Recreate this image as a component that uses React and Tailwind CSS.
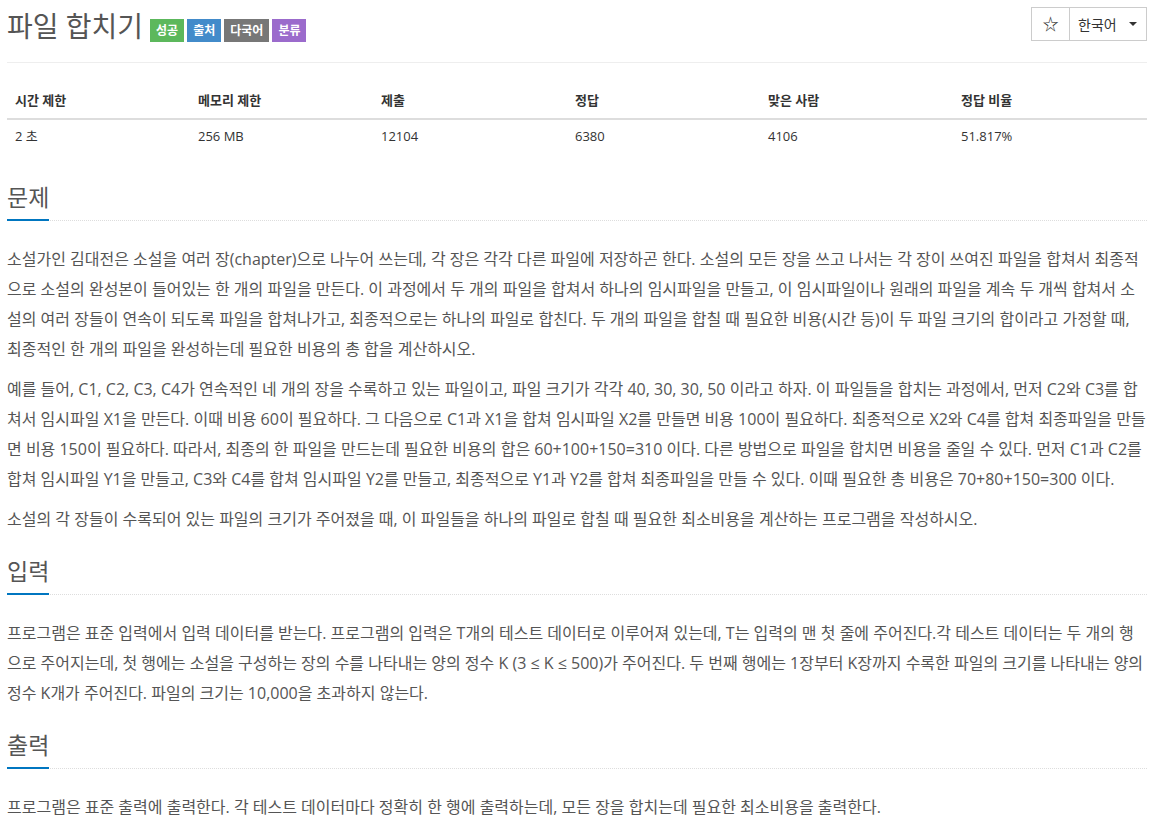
const FONT = { fontFamily: '"Open Sans", "Noto Sans CJK KR", sans-serif' };

const stats = [
  { label: "시간 제한", value: "2 초" },
  { label: "메모리 제한", value: "256 MB" },
  { label: "제출", value: "12104" },
  { label: "정답", value: "6380" },
  { label: "맞은 사람", value: "4106" },
  { label: "정답 비율", value: "51.817%" },
];

const badges = [
  { text: "성공", color: "bg-[#5cb85c]" },
  { text: "출처", color: "bg-[#428bca]" },
  { text: "다국어", color: "bg-[#777777]" },
  { text: "분류", color: "bg-[#9b6bcc]" },
];

function Section({ title, children }) {
  return (
    <section className="mt-[24px]">
      <div className="border-b border-dotted border-[#dddddd]">
        <h2 className="-mb-px inline-block border-b-2 border-[#0076c0] pb-[9px] text-[23px] leading-[26px] text-[#555555]">
          {title}
        </h2>
      </div>
      <div className="mt-[23px] space-y-[10px] text-[16px] leading-[30px] text-[#555555]">{children}</div>
    </section>
  );
}

export default function App() {
  return (
    <div className="min-h-screen bg-white pl-[7px] pt-[7px]" style={FONT}>
      <div className="w-[1140px]">
        <div className="flex items-start justify-between border-b border-[#eeeeee] pb-[20px]">
          <div className="flex items-start">
            <h1 className="mt-[3px] text-[28px] leading-[32px] text-[#555555]">파일 합치기</h1>
            <div className="ml-[7px] mt-[12px] flex gap-[3px]">
              {badges.map((b) => (
                <span
                  key={b.text}
                  className={`${b.color} flex h-[23px] items-center px-[6px] text-[12px] font-bold text-white`}
                >
                  {b.text}
                </span>
              ))}
            </div>
          </div>
          <div className="flex h-[34px] border border-[#cccccc] text-[14px] text-[#333333]">
            <button className="flex w-[38px] items-center justify-center border-r border-[#cccccc] text-[16px]">
              ☆
            </button>
            <button className="flex w-[76px] items-center gap-[12px] pl-[8px]">
              <span>한국어</span>
              <span className="h-0 w-0 border-x-[4px] border-t-[4px] border-x-transparent border-t-[#333333]" />
            </button>
          </div>
        </div>

        <div className="mt-[19px] text-[13px] text-[#333333]">
          <div className="grid grid-cols-[183px_183px_194px_193px_193px_1fr] border-b-2 border-[#dddddd]">
            {stats.map((s) => (
              <div key={s.label} className="px-[8px] py-[8px] font-bold leading-[20px]">
                {s.label}
              </div>
            ))}
          </div>
          <div className="grid grid-cols-[183px_183px_194px_193px_193px_1fr]">
            {stats.map((s) => (
              <div key={s.label} className="px-[8px] py-[6px] leading-[20px]">
                {s.value}
              </div>
            ))}
          </div>
        </div>

        <div className="pt-[8px]">
          <Section title="문제">
            <p>
              소설가인 김대전은 소설을 여러 장(chapter)으로 나누어 쓰는데, 각 장은 각각 다른 파일에 저장하곤 한다. 소설의 모든 장을 쓰고 나서는 각 장이 쓰여진 파일을 합쳐서 최종적으로 소설의 완성본이 들어있는 한 개의 파일을 만든다. 이 과정에서 두 개의 파일을 합쳐서 하나의 임시파일을 만들고, 이 임시파일이나 원래의 파일을 계속 두 개씩 합쳐서 소설의 여러 장들이 연속이 되도록 파일을 합쳐나가고, 최종적으로는 하나의 파일로 합친다. 두 개의 파일을 합칠 때 필요한 비용(시간 등)이 두 파일 크기의 합이라고 가정할 때, 최종적인 한 개의 파일을 완성하는데 필요한 비용의 총 합을 계산하시오.
            </p>
            <p>
              예를 들어, C1, C2, C3, C4가 연속적인 네 개의 장을 수록하고 있는 파일이고, 파일 크기가 각각 40, 30, 30, 50 이라고 하자. 이 파일들을 합치는 과정에서, 먼저 C2와 C3를 합쳐서 임시파일 X1을 만든다. 이때 비용 60이 필요하다. 그 다음으로 C1과 X1을 합쳐 임시파일 X2를 만들면 비용 100이 필요하다. 최종적으로 X2와 C4를 합쳐 최종파일을 만들면 비용 150이 필요하다. 따라서, 최종의 한 파일을 만드는데 필요한 비용의 합은 60+100+150=310 이다. 다른 방법으로 파일을 합치면 비용을 줄일 수 있다. 먼저 C1과 C2를 합쳐 임시파일 Y1을 만들고, C3와 C4를 합쳐 임시파일 Y2를 만들고, 최종적으로 Y1과 Y2를 합쳐 최종파일을 만들 수 있다. 이때 필요한 총 비용은 70+80+150=300 이다.
            </p>
            <p>
              소설의 각 장들이 수록되어 있는 파일의 크기가 주어졌을 때, 이 파일들을 하나의 파일로 합칠 때 필요한 최소비용을 계산하는 프로그램을 작성하시오.
            </p>
          </Section>

          <Section title="입력">
            <p>
              프로그램은 표준 입력에서 입력 데이터를 받는다. 프로그램의 입력은 T개의 테스트 데이터로 이루어져 있는데, T는 입력의 맨 첫 줄에 주어진다.각 테스트 데이터는 두 개의 행으로 주어지는데, 첫 행에는 소설을 구성하는 장의 수를 나타내는 양의 정수 K (3 ≤ K ≤ 500)가 주어진다. 두 번째 행에는 1장부터 K장까지 수록한 파일의 크기를 나타내는 양의 정수 K개가 주어진다. 파일의 크기는 10,000을 초과하지 않는다.
            </p>
          </Section>

          <Section title="출력">
            <p>
              프로그램은 표준 출력에 출력한다. 각 테스트 데이터마다 정확히 한 행에 출력하는데, 모든 장을 합치는데 필요한 최소비용을 출력한다.
            </p>
          </Section>
        </div>
      </div>
    </div>
  );
}
